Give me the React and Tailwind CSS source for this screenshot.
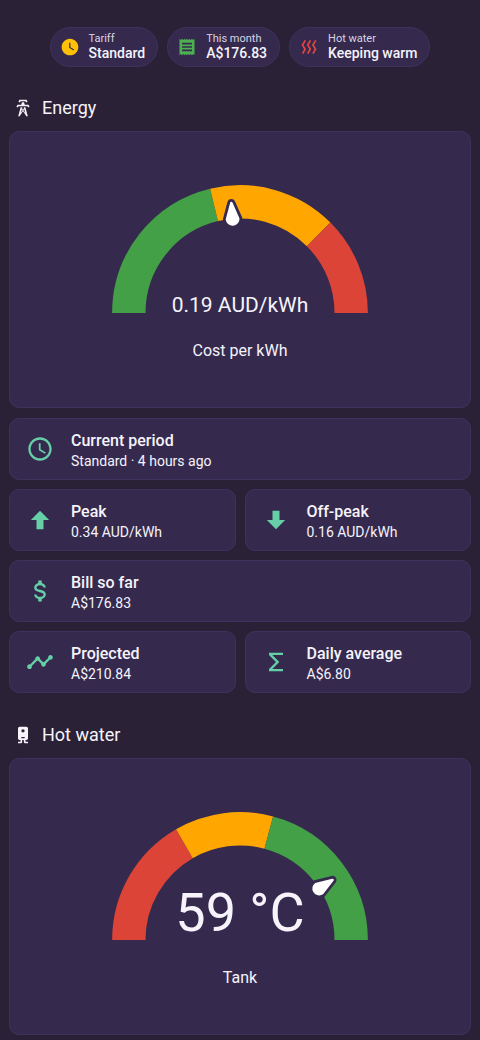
import React from "react";
import {
    MdAccessTime,
    MdReceipt,
    MdTimeline,
    MdWatchLater,
} from "react-icons/md";

const PATHS = {
    arrowUp: "M15,20H9V12H4.16L12,4.16L19.84,12H15V20Z",
    arrowDown: "M9,4H15V12H19.84L12,19.84L4.16,12H9V4Z",
    dollar: "M7,15H9C9,16.08 10.37,17 12,17C13.63,17 15,16.08 15,15C15,13.9 13.96,13.5 11.76,12.97C9.64,12.44 7,11.78 7,9C7,7.21 8.47,5.69 10.5,5.18V3H13.5V5.18C15.53,5.69 17,7.21 17,9H15C15,7.92 13.63,7 12,7C10.37,7 9,7.92 9,9C9,10.1 10.04,10.5 12.24,11.03C14.36,11.56 17,12.22 17,15C17,16.79 15.53,18.31 13.5,18.82V21H10.5V18.82C8.47,18.31 7,16.79 7,15Z",
    sigma: "M18,6H8.83L14.83,12L8.83,18H18V20H6V18L12,12L6,6V4H18V6Z",
    heat: "M8.5 4.5L5.4 9.5L8.5 14.7L5.2 20.5L3.4 19.6L6.1 14.7L3 9.5L6.7 3.6L8.5 4.5M14.7 4.4L11.6 9.5L14.7 14.5L11.4 20.3L9.6 19.4L12.3 14.5L9.2 9.5L12.9 3.5L14.7 4.4M21 4.4L17.9 9.5L21 14.5L17.7 20.3L15.9 19.4L18.6 14.5L15.5 9.5L19.2 3.5L21 4.4Z",
    tower: "M8.28,5.45L6.5,4.55L7.76,2H16.23L17.5,4.55L15.72,5.44L15,4H9L8.28,5.45M18.62,8H14.09L13.3,5H10.7L9.91,8H5.38L4.1,10.55L5.89,11.44L6.62,10H17.38L18.1,11.45L19.89,10.56L18.62,8M17.77,22H15.7L15.46,21.1L12,15.9L8.53,21.1L8.3,22H6.23L9.12,11H11.19L10.83,12.35L12,14.1L13.16,12.35L12.81,11H14.88L17.77,22M11.4,15L10.5,13.65L9.32,18.13L11.4,15M14.68,18.12L13.5,13.64L12.6,15L14.68,18.12Z",
    boiler: "M8 2C6.89 2 6 2.89 6 4V16C6 17.11 6.89 18 8 18H9V20H6V22H9C10.11 22 11 21.11 11 20V18H13V20C13 21.11 13.89 22 15 22H18V20H15V18H16C17.11 18 18 17.11 18 16V4C18 2.89 17.11 2 16 2H8M12 4.97A2 2 0 0 1 14 6.97A2 2 0 0 1 12 8.97A2 2 0 0 1 10 6.97A2 2 0 0 1 12 4.97M10 14.5H14V16H10V14.5Z",
};

const Icon = ({ name, className }) => (
    <svg
        viewBox="0 0 24 24"
        fill="currentColor"
        aria-hidden="true"
        className={className}
    >
        <path d={PATHS[name]} />
    </svg>
);

const Chip = ({ icon, label, value }) => (
    <div className="flex h-10 items-center gap-[9px] rounded-full border border-[#3d325b] bg-[#352a4e] pl-[9px] pr-3">
        {icon}
        <div className="pb-[3px]">
            <p className="text-[11px] leading-[14px] text-[#d8d3e2]">{label}</p>
            <p className="text-sm font-medium leading-[14px]">{value}</p>
        </div>
    </div>
);

const Heading = ({ icon, children }) => (
    <h2 className="flex items-center gap-[9px] px-1 text-lg leading-6">
        <Icon name={icon} className="size-5" />
        {children}
    </h2>
);

const Tile = ({ icon, title, value, wide }) => (
    <div
        className={`flex h-[62px] items-center gap-[17px] rounded-[10px] border border-[#3d325b] bg-[#352a4e] pl-4 ${
            wide ? "col-span-2" : ""
        }`}
    >
        <div className="text-[#66cfa8]">{icon}</div>
        <div className="pt-px">
            <p className="text-base font-medium leading-[22px]">{title}</p>
            <p className="text-sm leading-[18px]">{value}</p>
        </div>
    </div>
);

// 0 is the left end of the dial, 180 the right end
const point = (deg, r = 40) => {
    const a = (deg * Math.PI) / 180;
    return `${-r * Math.cos(a)} ${-r * Math.sin(a)}`;
};

const Gauge = ({ name, value, valueClass, min, max, level, segments }) => {
    const toDeg = (v) => ((v - min) / (max - min)) * 180;

    return (
        <div className="flex h-[277px] flex-col items-center rounded-[10px] border border-[#3d325b] bg-[#352a4e] pt-[42px]">
            <div className="grid w-full max-w-[278px]">
                <svg
                    viewBox="-50 -50 100 50"
                    aria-hidden="true"
                    className="col-start-1 row-start-1 w-full overflow-visible"
                >
                    {segments.map((s) => (
                        <path
                            key={s.from}
                            d={`M ${point(toDeg(s.from))} A 40 40 0 0 1 ${point(toDeg(s.to))}`}
                            fill="none"
                            stroke={s.color}
                            strokeWidth="12"
                        />
                    ))}
                    <path
                        d="M -34 -3 L -40 -0.9 A 0.95 0.95 0 0 0 -40 0.9 L -34 3 A 3 3 0 1 0 -34 -3 Z"
                        fill="#fff"
                        stroke="#352a4e"
                        strokeWidth="1"
                        transform={`rotate(${toDeg(level)})`}
                    />
                </svg>
                <p
                    className={`col-start-1 row-start-1 self-end text-center ${valueClass}`}
                >
                    {value}
                </p>
            </div>
            <p className="mt-[26px] text-base leading-6">{name}</p>
        </div>
    );
};

const GREEN = "#43a047";
const AMBER = "#ffa600";
const RED = "#db4437";

const App = () => {
    return (
        <main className="min-h-screen bg-[#2a2136] px-[9px] pb-[5px] pt-[27px] font-[Roboto,sans-serif] text-[#f6f3fb]">
            {/* Status chips */}
            <div className="flex flex-wrap justify-center gap-[9px]">
                <Chip
                    icon={<MdWatchLater className="size-5 text-[#ffc107]" />}
                    label="Tariff"
                    value="Standard"
                />
                <Chip
                    icon={<MdReceipt className="size-5 text-[#4caf50]" />}
                    label="This month"
                    value="A$176.83"
                />
                <Chip
                    icon={<Icon name="heat" className="size-5 text-[#e5443f]" />}
                    label="Hot water"
                    value="Keeping warm"
                />
            </div>

            {/* Energy */}
            <section className="mt-[29px]">
                <Heading icon="tower">Energy</Heading>
                <div className="mt-[11px]">
                    <Gauge
                        name="Cost per kWh"
                        value="0.19 AUD/kWh"
                        valueClass="text-[21px] leading-4"
                        min={0}
                        max={0.4}
                        level={0.19}
                        segments={[
                            { from: 0, to: 0.17, color: GREEN },
                            { from: 0.17, to: 0.3, color: AMBER },
                            { from: 0.3, to: 0.4, color: RED },
                        ]}
                    />
                </div>
                <div className="mt-[10px] grid grid-cols-2 gap-[9px]">
                    <Tile
                        wide
                        icon={<MdAccessTime className="size-7" />}
                        title="Current period"
                        value="Standard · 4 hours ago"
                    />
                    <Tile
                        icon={<Icon name="arrowUp" className="size-7" />}
                        title="Peak"
                        value="0.34 AUD/kWh"
                    />
                    <Tile
                        icon={<Icon name="arrowDown" className="size-7" />}
                        title="Off-peak"
                        value="0.16 AUD/kWh"
                    />
                    <Tile
                        wide
                        icon={<Icon name="dollar" className="size-7" />}
                        title="Bill so far"
                        value="A$176.83"
                    />
                    <Tile
                        icon={<MdTimeline className="size-7" />}
                        title="Projected"
                        value="A$210.84"
                    />
                    <Tile
                        icon={<Icon name="sigma" className="size-7" />}
                        title="Daily average"
                        value="A$6.80"
                    />
                </div>
            </section>

            {/* Hot water */}
            <section className="mt-[30px]">
                <Heading icon="boiler">Hot water</Heading>
                <div className="mt-[11px]">
                    <Gauge
                        name="Tank"
                        value="59 °C"
                        valueClass="text-[54px] leading-[54px]"
                        min={10}
                        max={70}
                        level={59}
                        segments={[
                            { from: 10, to: 30, color: RED },
                            { from: 30, to: 45, color: AMBER },
                            { from: 45, to: 70, color: GREEN },
                        ]}
                    />
                </div>
            </section>
        </main>
    );
};

export default App;
